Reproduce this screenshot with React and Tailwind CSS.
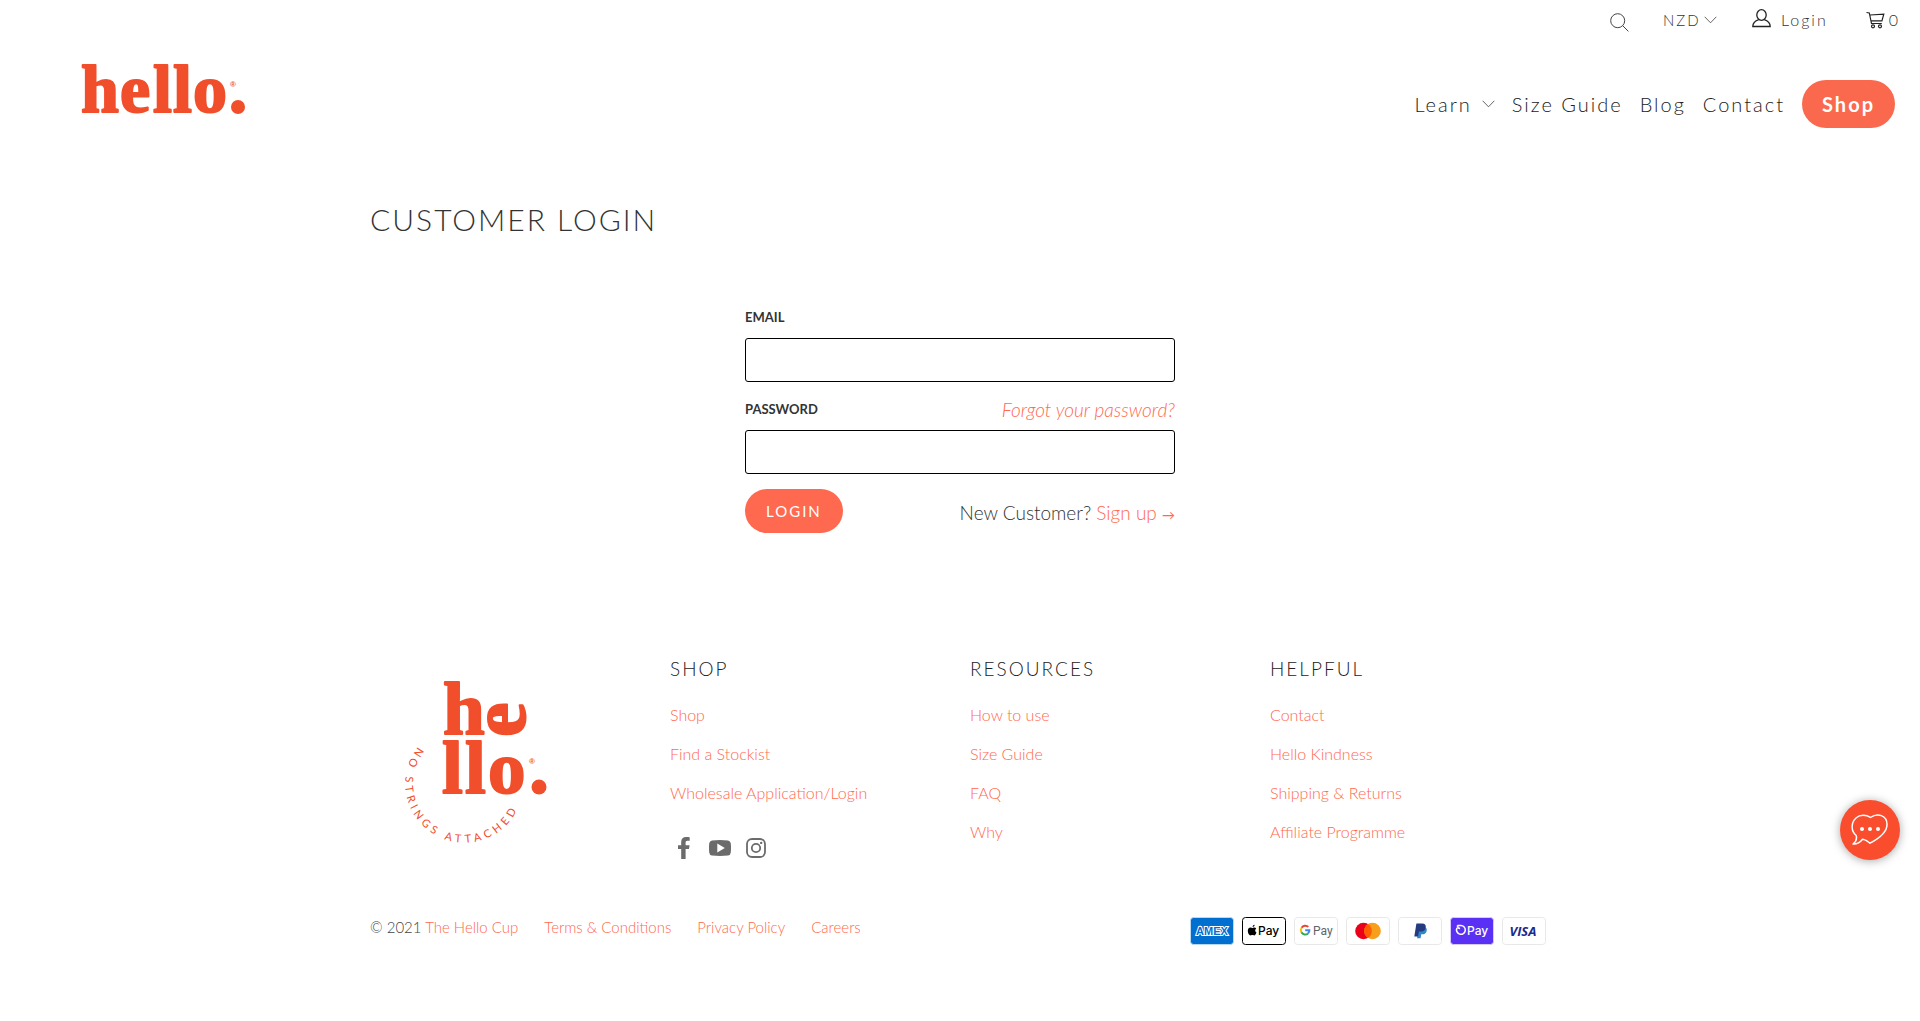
import React from "react";

const LOGO = "#f14e2b";

function Wordmark() {
  return (
    <svg width="168" height="52" viewBox="0 0 168 52" role="img" aria-label="hello." className="block overflow-visible">
      <g fill={LOGO} stroke={LOGO} strokeWidth="2" strokeLinejoin="round" fontFamily="'Liberation Serif', serif" fontWeight="700">
        <text x="1 40 73 93 113" y="48" fontSize="68">hello</text>
      </g>
      <circle cx="158" cy="43" r="7" fill={LOGO} />
      <text x="150" y="23" fontSize="8" fill={LOGO} fontFamily="'Liberation Sans', sans-serif" fontWeight="700">®</text>
    </svg>
  );
}

function FooterLogo() {
  return (
    <svg width="190" height="200" viewBox="0 0 190 200" role="img" aria-label="hello. No strings attached" className="block">
      <path id="strings-arc" d="M 38 84 A 59 59 0 1 0 138 145" fill="none" />
      <g fill={LOGO} stroke={LOGO} strokeWidth="2" strokeLinejoin="round" fontFamily="'Liberation Serif', serif" fontWeight="700">
        <text x="63" y="71" fontSize="75">h</text>
        <text x="62 85 108" y="130" fontSize="75">llo</text>
        <text transform="translate(145 74) rotate(-90)" x="0" y="0" fontSize="78">e</text>
      </g>
      <circle cx="159" cy="124" r="7.5" fill={LOGO} />
      <text x="149" y="101" fontSize="8" fill={LOGO} fontFamily="'Liberation Sans', sans-serif" fontWeight="700">®</text>
      <text fontSize="11" fontWeight="400" fill={LOGO} fontFamily="Lato, sans-serif" className="tracking-[4px]">
        <textPath href="#strings-arc">NO STRINGS ATTACHED</textPath>
      </text>
    </svg>
  );
}

function Chevron() {
  return (
    <svg width="13" height="8" viewBox="0 0 13 8" fill="none" stroke="#555" strokeWidth=".9" aria-hidden="true">
      <path d="M.7.8 6.5 6.8 12.3.8" />
    </svg>
  );
}

function TopBar() {
  return (
    <div className="flex h-10 items-center justify-end pr-5 text-base font-light tracking-[2px] text-[#333]">
      <button type="button" aria-label="Search" className="mr-[34px] pt-1">
        <svg width="19" height="19" viewBox="0 0 19 19" fill="none" stroke="#444" strokeWidth="1" aria-hidden="true">
          <circle cx="7.7" cy="7.7" r="7" />
          <path d="m12.8 12.8 5.6 5.6" />
        </svg>
      </button>
      <label className="relative mr-[35px] flex items-center">
        <span className="sr-only">Currency</span>
        <select defaultValue="NZD" className="h-7 w-[54px] appearance-none bg-transparent text-[15px] tracking-[2px] outline-none">
          <option>NZD</option>
        </select>
        <span className="pointer-events-none absolute right-0"><Chevron /></span>
      </label>
      <a href="#login" className="mr-[38px] flex items-center gap-2.5">
        <svg width="19" height="19" viewBox="0 0 19 19" fill="none" stroke="#222" strokeWidth="1.3" className="mb-1" aria-hidden="true">
          <ellipse cx="9.5" cy="6" rx="4.7" ry="5.3" />
          <path d="M6.8 10.6C3 11.8.8 13.4.8 17.5h17.4c0-4.100-2.200-5.700-6-6.900" />
        </svg>
        Login
      </a>
      <a href="#cart" aria-label="Cart, 0 items" className="flex items-center gap-1">
        <svg width="19" height="18" viewBox="0 0 19 18" fill="none" stroke="#222" strokeWidth="1.2" aria-hidden="true">
          <path d="M.5 1.500 3.300 2l2.200 10.500h10.300M4 4l13.800-.800-1.900 6.600H5" />
          <circle cx="7" cy="15.300" r="1.500" />
          <circle cx="14" cy="15.300" r="1.500" />
        </svg>
        0
      </a>
    </div>
  );
}

function Header() {
  return (
    <header>
      <TopBar />
      <div className="flex items-start justify-between pr-[25px] pl-20">
        <a href="#home" className="mt-6"><Wordmark /></a>
        <nav className="mt-10 flex items-center gap-[17px] text-xl font-light tracking-[2px] text-[#222]">
          <a href="#learn" className="flex items-center gap-2.5">Learn <Chevron /></a>
          <a href="#size-guide">Size Guide</a>
          <a href="#blog">Blog</a>
          <a href="#contact">Contact</a>
          <a href="#shop" className="flex h-12 items-center rounded-full bg-[#fa684d] px-5 font-bold text-white">Shop</a>
        </nav>
      </div>
    </header>
  );
}

const INPUT = "block h-11 w-full rounded-[3px] border border-black bg-white px-3 outline-none";
const LABEL = "text-[13px] font-bold text-[#333]";

function LoginForm() {
  return (
    <form className="mx-auto mt-[59px] w-full max-w-[430px]" onSubmit={(e) => e.preventDefault()}>
      <div className="flex h-8 items-center">
        <label htmlFor="email" className={LABEL}>EMAIL</label>
      </div>
      <input id="email" type="email" className={`${INPUT} mt-1`} />
      <div className="mt-3 flex h-8 items-center justify-between">
        <label htmlFor="password" className={LABEL}>PASSWORD</label>
        <a href="#forgot" className="text-[19px] font-light text-[#ff694f] italic">Forgot your password?</a>
      </div>
      <input id="password" type="password" className={`${INPUT} mt-1`} />
      <div className="mt-[15px] flex h-11 items-center justify-between">
        <button type="submit" className="h-11 rounded-full bg-[#ff694f] px-[21px] text-[15px] tracking-[2px] text-white">LOGIN</button>
        <p className="pt-1 text-[19px] font-light text-[#333]">
          New Customer? <a href="#signup" className="text-[#ff694f]">Sign up <span className="text-[13px] font-normal">→</span></a>
        </p>
      </div>
    </form>
  );
}

function Social() {
  return (
    <div className="mt-8 flex items-center gap-[15px] pl-1 text-[#6b6b6b]">
      <a href="#facebook" aria-label="Facebook" className="flex w-5 justify-center">
        <svg width="12" height="22" viewBox="0 0 12 22" fill="currentColor" aria-hidden="true">
          <path d="M3.200 22V12.100H0V8.200h3.200V5C3.200 1.700 5.200 0 8 0c1.700 0 3.300.2 3.700.2v3.500H9.500C8 3.700 7.600 4.500 7.600 5.700v2.500h4l-.6 3.900H7.600V22z" />
        </svg>
      </a>
      <a href="#youtube" aria-label="YouTube">
        <svg width="22" height="16" viewBox="0 0 22 16" fill="currentColor" aria-hidden="true">
          <path fillRule="evenodd" d="M3 .5Q11-.4 19 .5 21.500.8 21.800 3.500q.4 4.500 0 9-.3 2.700-2.800 3-8 .8-16 0-2.500-.3-2.800-3-.4-4.500 0-9Q.5.800 3 .5ZM8.300 3.400v9.200L15.800 8z" />
        </svg>
      </a>
      <a href="#instagram" aria-label="Instagram">
        <svg width="20" height="20" viewBox="0 0 20 20" fill="none" stroke="currentColor" strokeWidth="1.800" aria-hidden="true">
          <rect x="1" y="1" width="18" height="18" rx="5" />
          <circle cx="10" cy="10" r="4.200" />
          <circle cx="15.200" cy="4.900" r="1.200" fill="currentColor" stroke="none" />
        </svg>
      </a>
    </div>
  );
}

const COLUMNS = [
  { title: "SHOP", links: ["Shop", "Find a Stockist", "Wholesale Application/Login"], social: true },
  { title: "RESOURCES", links: ["How to use", "Size Guide", "FAQ", "Why"] },
  { title: "HELPFUL", links: ["Contact", "Hello Kindness", "Shipping & Returns", "Affiliate Programme"] },
];

function Card({ label, fill = "#fff", border = "#e8e8e8", children }) {
  return (
    <svg width="44" height="28" viewBox="0 0 44 28" role="img" aria-label={label} fontFamily="Lato, sans-serif">
      <rect x=".5" y=".5" width="43" height="27" rx="3" fill={fill} stroke={border} />
      {children}
    </svg>
  );
}

function Payments() {
  return (
    <div className="flex gap-2">
      <Card label="American Express" fill="#016fd0" border="#bcd9f2">
        <text x="22" y="18" textAnchor="middle" fontSize="11" fontWeight="700" fontFamily="'Liberation Sans', sans-serif" fill="#016fd0" stroke="#fff" strokeWidth="2" paintOrder="stroke">AMEX</text>
      </Card>
      <Card label="Apple Pay" border="#000">
        <path d="M12.600 7.700c.2 1.200-.8 2.300-2 2.300-.1-1.200.8-2.200 2-2.300ZM14.200 11.500c-1.500 1-1.300 3.200.3 4-.5 1.400-1.400 2.900-2.400 2.900-.7 0-.9-.4-1.800-.4s-1.200.4-1.800.4C7.100 18.400 5.800 16 5.800 13.800c0-2.200 1.300-3.400 2.700-3.400.8 0 1.300.5 1.900.5s1-.5 2-.5c.7 0 1.400.400 1.800 1.100Z" />
        <text x="16" y="18" fontSize="12" fontWeight="500" fontFamily="Inter, sans-serif">Pay</text>
      </Card>
      <Card label="Google Pay">
        <g fill="none" strokeWidth="2">
          <path d="M14.300 9.900A4.300 4.300 0 0 0 7.600 10.700" stroke="#ea4335" />
          <path d="M7.600 10.700A4.300 4.300 0 0 0 7.400 15.300" stroke="#fbbc04" />
          <path d="M7.400 15.300A4.300 4.300 0 0 0 14 16.400" stroke="#34a853" />
          <path d="M14 16.400A4.300 4.300 0 0 0 15.400 13.300H11.200" stroke="#4285f4" />
        </g>
        <text x="19" y="18" fontSize="12" fontWeight="400" fontFamily="Roboto, sans-serif" fill="#5f6368">Pay</text>
      </Card>
      <Card label="Mastercard">
        <circle cx="17.500" cy="14" r="8.300" fill="#eb001b" />
        <circle cx="26.500" cy="14" r="8.300" fill="#f79e1b" />
        <path d="M22 7a8.300 8.300 0 0 1 0 14 8.300 8.300 0 0 1 0-14Z" fill="#ff5f00" />
      </Card>
      <Card label="PayPal">
        <path d="M20.500 10h6.300c2 .9 2.400 2.500 1.700 4.500-.7 2-2.300 2.800-4.300 2.800h-1l-.6 4h-3.500Z" fill="#3086c8" />
        <path d="M18.400 6.500h5.700c3 0 4.200 1.800 3.500 4.400-.6 2.500-2.500 3.700-5 3.700h-1.700l-.8 4.900h-3.800Z" fill="#253b80" />
      </Card>
      <Card label="Shop Pay" fill="#5a31f4" border="#d5cbfc">
        <path d="M7.400 8.500h3.300a4.400 4.400 0 1 1-3.700 2.400M7.400 8.500c.1 1.900 1 2.900 2.700 2.900" fill="none" stroke="#fff" strokeWidth="1.500" />
        <text x="17" y="18" fontSize="12" fontWeight="500" fontFamily="Inter, sans-serif" fill="#fff">Pay</text>
      </Card>
      <Card label="Visa">
        <text x="21" y="19" textAnchor="middle" fontSize="13" fontWeight="700" fontStyle="italic" fontFamily="'Open Sans', sans-serif" fill="#1a2a8f">VISA</text>
      </Card>
    </div>
  );
}

function Footer() {
  return (
    <footer className="mx-auto mt-[120px] w-full max-w-[1200px] px-2.5 font-light">
      <div className="grid grid-cols-4 gap-5">
        <div className="pt-2.5 pl-2.5"><FooterLogo /></div>
        {COLUMNS.map((c) => (
          <div key={c.title}>
            <h2 className="text-[19px] leading-8 tracking-[2px] text-[#222]">{c.title}</h2>
            <ul className="mt-[18px] flex flex-col gap-[15px] text-base leading-6 text-[#ff694f]">
              {c.links.map((l) => (
                <li key={l}><a href="#top">{l}</a></li>
              ))}
            </ul>
            {c.social && <Social />}
          </div>
        ))}
      </div>
      <div className="mt-[54px] flex items-start justify-between pr-1">
        <p className="flex gap-[26px] text-[15px] leading-5 text-[#ff694f]">
          <span className="text-[#444]">© 2021 <a href="#home" className="text-[#ff694f]">The Hello Cup</a></span>
          <a href="#terms">Terms &amp; Conditions</a>
          <a href="#privacy">Privacy Policy</a>
          <a href="#careers">Careers</a>
        </p>
        <Payments />
      </div>
    </footer>
  );
}

function ChatButton() {
  return (
    <button type="button" aria-label="Chat" className="fixed right-5 bottom-[161px] flex size-[60px] items-center justify-center rounded-full bg-[#f94d2d] shadow-[0_1px_10px_rgba(0,0,0,0.35)]">
      <svg width="38" height="32" viewBox="0 0 38 32" fill="none" stroke="#fff" strokeWidth="1.500" strokeLinejoin="round" aria-hidden="true">
        <path d="M19.500 3.500C15.500.800 9 .300 5 4-.2 9-.2 17 5.200 21.500c.9 3.500-.5 6.500-3.200 8.500 4 .3 7-1.500 9.500-4.800 3 .3 5.500 2.300 7.500 4 7-3.700 17-9.700 17-18.700 0-9-9.500-12.200-16.500-7Z" />
        <g fill="#fff" stroke="none"><circle cx="11" cy="15" r="2" /><circle cx="19" cy="15" r="2" /><circle cx="27" cy="15" r="2" /></g>
      </svg>
    </button>
  );
}

export default function App() {
  return (
    <div className="bg-white font-['Lato',sans-serif] text-[#333]">
      <Header />
      <main className="mx-auto mt-[67px] w-full max-w-[1200px] px-2.5">
        <h1 className="text-[30px] leading-12 font-light tracking-[2px]">CUSTOMER LOGIN</h1>
        <LoginForm />
      </main>
      <Footer />
      <ChatButton />
    </div>
  );
}
